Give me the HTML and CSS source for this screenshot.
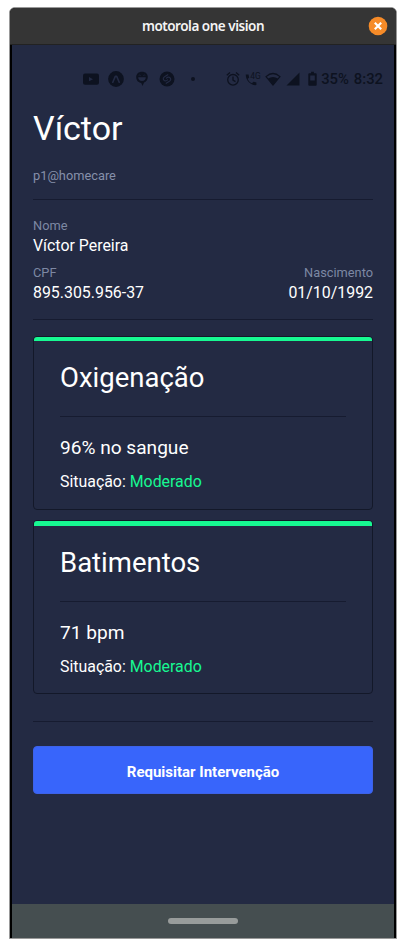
FILE: index.html
```html
<!DOCTYPE html>
<html lang="pt-BR">
<head>
<meta charset="utf-8">
<title>motorola one vision</title>
<link rel="stylesheet" href="styles.css">
</head>
<body>
<div class="window">
  <header class="titlebar">
    <span class="window-title">motorola one vision</span>
    <svg class="close" viewBox="0 0 20 20"><circle cx="10" cy="10" r="9.3" fill="#f68b28"/><path d="M6.8 6.8l6.4 6.4M13.2 6.8l-6.4 6.4" stroke="#fff" stroke-width="2.2"/></svg>
  </header>
  <div class="screen">
    <div class="status">
      <div class="notifications">
        <svg width="16" height="16" viewBox="0 0 16 16"><rect y="2.5" width="16" height="11.3" rx="2" fill="#0d1220"/><path d="M6 6v4.300l4-2.150z" fill="#232a43"/></svg>
        <svg width="16" height="16" viewBox="0 0 16 16"><circle cx="8" cy="8" r="7.9" fill="#0d1220"/><path d="M4.8 11.2L7.3 5.4h1.4l2.5 5.8" fill="none" stroke="#232a43" stroke-width="1.6" stroke-linecap="round" stroke-linejoin="round"/></svg>
        <svg width="16" height="16" viewBox="0 0 16 16"><path d="M8 .8c3.6 0 5.8 2.2 5.8 5.3 0 3-1.6 4.8-3.7 5.5L8.5 14.9 7.2 12C4.3 11.8 2.2 9.5 2.2 6.1 2.2 3 4.5.8 8 .8z" fill="#0d1220"/><path d="M4.2 6.3h7.6c0 2.4-1.5 3.7-3.8 3.7S4.2 8.7 4.2 6.3z" fill="#232a43"/><path d="M4.7 4.5q1-1 2 0M9.3 4.5q1-1 2 0" fill="none" stroke="#232a43" stroke-width=".6"/></svg>
        <svg width="16" height="16" viewBox="0 0 16 16"><circle cx="8" cy="8" r="7.5" fill="#0d1220"/><path d="M8.8 3.700L5.600 5.700C4.100 6.700 3.900 8 4.900 9.200s2.300.9 3.700-.3M7.200 12.300l3.200-2c1.500-1 1.700-2.300.7-3.500s-2.300-.9-3.700.3" fill="none" stroke="#232a43" stroke-width="1.2" stroke-linecap="round"/></svg>
        <span class="dot"></span>
      </div>
      <div class="indicators">
        <svg width="14" height="16" viewBox="0 0 14 16"><circle cx="7" cy="8.8" r="5.3" fill="none" stroke="#0d1220" stroke-width="1.3"/><path d="M7 5.5v3.6l2.5 1.5M.8 4.3L4 1.6M13.2 4.3L10 1.6" fill="none" stroke="#0d1220" stroke-width="1.3"/></svg>
        <svg class="call" width="16" height="16" viewBox="0 0 16 16"><path d="M.8 3.5h2.700l.7 3-1.600 1.500c1 2 2.300 3.300 4.300 4.300l1.500-1.600 3 .7v2.700C5.700 14.700.5 9.300.8 3.500z" fill="#0d1220"/><text x="5.3" y="7.500" font-size="8.400" fill="#0d1220">4G</text></svg>
        <svg class="wifi" width="16" height="16" viewBox="0 0 16 16"><path d="M1 5.600Q8-.6 15 5.600L8 14z" fill="none" stroke="#0d1220" stroke-width="1.2"/><path d="M3 7.500q5-3.200 10 0L8 13.800z" fill="#0d1220"/></svg>
        <svg class="signal" width="14" height="16" viewBox="0 0 14 16"><path d="M13.5 1.5V14.5H.5z" fill="#0d1220"/></svg>
        <svg class="battery" width="9" height="16" viewBox="0 0 9 16"><path d="M1.3 2.3h1.8V.8h2.8v1.5h1.8q1 0 1 1v10.5q0 1-1 1H1.3q-1 0-1-1V3.3q0-1 1-1z" fill="#0d1220"/><path d="M2.2 4.5h4.6v5H2.2z" fill="#232a43"/></svg>
        <span class="percent">35%</span>
        <span class="clock">8:32</span>
      </div>
    </div>
    <main class="content">
      <h1>Víctor</h1>
      <p class="account">p1@homecare</p>
      <section class="details">
        <div class="field"><span class="label">Nome</span><span class="value name">Víctor Pereira</span></div>
        <div class="row">
          <div class="field"><span class="label">CPF</span><span class="value">895.305.956-37</span></div>
          <div class="field end"><span class="label">Nascimento</span><span class="value">01/10/1992</span></div>
        </div>
      </section>
      <section class="cards">
        <article class="card">
          <h2>Oxigenação</h2>
          <p class="reading">96% no sangue</p>
          <p class="state">Situação: <span class="good">Moderado</span></p>
        </article>
        <article class="card">
          <h2>Batimentos</h2>
          <p class="reading">71 bpm</p>
          <p class="state">Situação: <span class="good">Moderado</span></p>
        </article>
      </section>
      <div class="actions"><button>Requisitar Intervenção</button></div>
    </main>
  </div>
  <footer class="navbar"><span class="handle"></span></footer>
</div>
</body>
</html>
```
FILE: styles.css
```css
* { box-sizing: border-box; }
body { margin: 0; background: #fff; font-family: Roboto, sans-serif; color: #fff; }
h1, h2, p { margin: 0; font-weight: 400; }
.window { width: 388px; height: 932px; margin: 7px 0 0 9px; border: 1px solid #999; border-radius: 6px 6px 0 0; overflow: hidden; background: #000; display: flex; flex-direction: column; }
.titlebar { height: 37px; flex: none; background: #353535; border-bottom: 1px solid #222; display: grid; grid-template-columns: 28px 1fr 28px; align-items: center; }
.window-title { grid-column: 2; text-align: center; font: 600 13.5px/36px "Noto Sans", sans-serif; color: #f4f4f4; letter-spacing: -.48px; }
.close { width: 20px; height: 20px; }
.screen { flex: 1; margin: 0 2px; background: #232a43; padding: 0 21px; }
.status { display: flex; justify-content: space-between; height: 16px; margin: 26px -10px 0 50px; color: #0d1220; }
.notifications { display: flex; gap: 9.4px; align-items: center; }
.dot { width: 4px; height: 4px; border-radius: 50%; background: #0d1220; margin-left: 6px; }
.indicators { display: flex; align-items: center; }
.call { margin-left: 5px; }
.wifi { margin-left: 4px; }
.signal { margin-left: 5px; }
.battery { margin-left: 8px; }
.percent, .clock { font-size: 14.8px; line-height: 16px; font-weight: 500; }
.percent { margin-left: 4px; }
.clock { margin-left: 5px; }
h1 { margin-top: 20px; font-size: 34px; line-height: 42px; }
.account { margin-top: 17px; height: 34px; font-size: 12.8px; line-height: 20px; color: #8690aa; border-bottom: 1px solid #161b30; }
.details { height: 120px; padding-top: 16px; border-bottom: 1px solid #161b30; }
.field { display: flex; flex-direction: column; }
.label { font-size: 12.8px; line-height: 19px; color: #7d88a3; }
.value { margin-top: 1px; font-size: 15.9px; line-height: 20px; }
.row { display: flex; justify-content: space-between; margin-top: 7px; }
.end { text-align: right; }
.cards { display: flex; flex-direction: column; gap: 10px; padding: 16px 0 27px; border-bottom: 1px solid #161b30; }
.card { height: 174px; border: 1px solid #131829; border-radius: 4px; padding: 0 26px; overflow: hidden; }
.card::before { content: ""; display: block; height: 4px; margin: 0 -26px; background: #17f992; }
.card + .card::before { height: 5px; }
h2 { height: 76px; padding-top: 19px; font-size: 27.5px; line-height: 36px; border-bottom: 1px solid #161b30; }
.reading { margin-top: 18px; font-size: 19.1px; line-height: 26px; }
.state { margin-top: 10px; font-size: 15.9px; line-height: 22px; }
.good { color: #17f992; }
.actions { padding-top: 24px; }
button { display: block; width: 100%; height: 48px; border: 1px solid #3d62e8; border-radius: 4px; background: #3865fb; color: #fff; font: 700 15px/46px Roboto, sans-serif; padding: 2px 0 0; }
.navbar { height: 34px; flex: none; margin: 0 2px; background: #454e50; display: flex; justify-content: center; align-items: center; }
.handle { width: 70px; height: 6px; border-radius: 3px; background: #989c9b; }
```
